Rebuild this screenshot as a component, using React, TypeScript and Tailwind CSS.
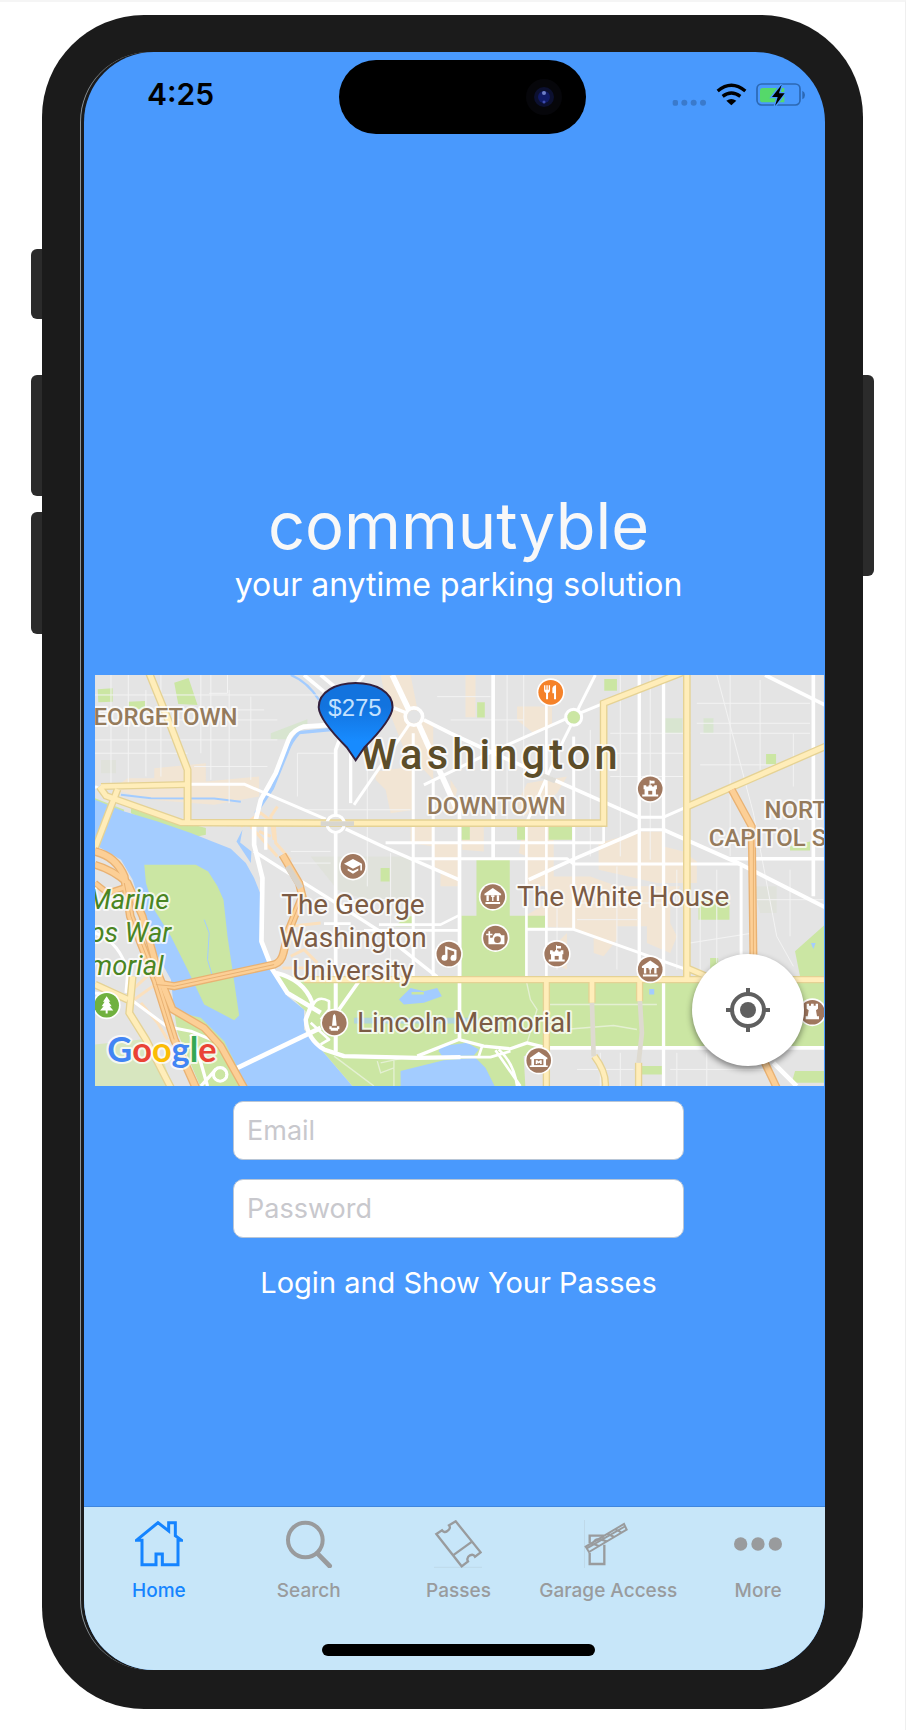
import type { ReactNode } from "react";

const pinColor = "#a0785f";

function Poi({ x, y, color = pinColor, children }: { x: number; y: number; color?: string; children: ReactNode }) {
  return (
    <g transform={`translate(${x} ${y})`}>
      <circle r="42" fill="#fff" />
      <circle r="37" fill={color} />
      <g fill="#fff">{children}</g>
    </g>
  );
}

const Museum = () => (
  <>
    <path d="M-25 -9 L0 -26 L25 -9 V-4 H-25Z" />
    <path d="M-19 -4h7v17h-7z M-5 -4h10v5h-3v12h-4v-12h-3z M12 -4h7v17h-7z M-22 16h44v6h-44z" />
  </>
);

const Castle = () => (
  <>
    <path d="M-2 -26h3v2h12v8h-12v7h-3z" />
    <path d="M-20 -11h8v4h7v-4h10v4h7v-4h8v12h-3v16h7v6h-48v-6h7v-16h-3z" />
    <rect x="-6" y="6" width="12" height="11" fill={pinColor} />
  </>
);

type Line = { d: string; w?: number };

const whiteRoads: Line[] = [
  { d: "M735 490V1145 M735 440V240L750 200", w: 11 },
  { d: "M780 200V400", w: 10 },
  { d: "M968 190V930 M1028 330V930", w: 9 },
  { d: "M1107 400V1110", w: 11 },
  { d: "M1208 15V565", w: 11 },
  { d: "M1308 450V925", w: 8 },
  { d: "M1368 100V930", w: 8 },
  { d: "M1450 200V780", w: 9 },
  { d: "M1540 470V520", w: 8 },
  { d: "M1647 15V930 M1720 30V1250", w: 10 },
  { d: "M1953 580V860", w: 9 },
  { d: "M2170 15V680", w: 11 },
  { d: "M885 519H1540", w: 9 },
  { d: "M970 567H1430L1450 583H1950", w: 9 },
  { d: "M1920 567H2205", w: 11 },
  { d: "M1647 442H1720 M1647 480H1720", w: 9 },
  { d: "M1360 1135H2205", w: 11 },
  { d: "M1310 779H1450L1790 900", w: 9 },
  { d: "M865 765H1050L1110 735 M700 762H780 M820 782H1110", w: 8 },
  { d: "M12 350L40 365 M300 343H460L705 448", w: 9 },
  { d: "M765 478L880 532L1110 632", w: 10 },
  { d: "M790 405L955 165", w: 9 },
  { d: "M905 15L955 120", w: 17 },
  { d: "M985 165L1100 420", w: 17 },
  { d: "M820 15L800 40 M900 110L950 130", w: 10 },
  { d: "M1000 150L1080 190L1210 250L1650 445", w: 11 },
  { d: "M1000 345L1210 243L1430 145L1540 100", w: 9 },
  { d: "M1515 15L1467 110L1450 150L1420 210L1370 320L1310 455", w: 9 },
  { d: "M1315 630L1450 568L1650 482", w: 11 },
  { d: "M1720 480L1940 578L2210 715", w: 12 },
  { d: "M1720 442L1790 411", w: 9 },
  { d: "M2025 15L2205 105", w: 11 },
  { d: "M690 15L750 65 M640 15L700 65", w: 11 },
  { d: "M720 165L640 170Q608 180 595 205L555 310L510 390L490 470V525L515 625L512 815L545 900L590 970L690 1030", w: 14 },
  { d: "M490 545L580 602L720 690L860 780L1040 922", w: 10 },
  { d: "M525 460V540", w: 10 },
  { d: "M440 1195L690 1075", w: 14 },
  { d: "M805 935L745 1020 M735 930V1150", w: 11 },
  { d: "M555 910Q640 930 665 1000L645 1050Q650 1110 700 1140L760 1160L980 1165L1110 1163", w: 13 },
  { d: "M980 1160L1105 1110L1180 1130L1260 1138L1310 1120L1370 1135", w: 10 },
  { d: "M1080 1163H1200L1260 1145 M1215 1142L1290 1250 M1175 1130L1165 1160 M1225 1140Q1270 1180 1280 1250", w: 8 },
  { d: "M665 1010Q680 975 715 995V1020L690 1050 M660 1060L715 1110L690 1125", w: 8 },
  { d: "M12 790Q90 820 110 910L105 970 M12 970L120 990L230 1072L300 1085L385 1120L430 1190", w: 9 },
  { d: "M300 1095L330 1180L350 1250 M330 1250L375 1200", w: 10 },
  { d: "M2050 1180L2120 1250", w: 14 },
];

const yellowRoads: Line[] = [
  { d: "M175 10L240 170L290 300V460", w: 16 },
  { d: "M30 350L290 344", w: 13 },
  { d: "M80 358L12 535", w: 15 },
  { d: "M25 350L45 378L270 458L700 460H1540V100L1775 8", w: 15 },
  { d: "M1790 10V925", w: 15 },
  { d: "M1790 411L2210 228", w: 15 },
  { d: "M640 930H2210 M1790 895L1860 925", w: 14 },
  { d: "M1368 930V1255 M1505 930V1000", w: 14 },
  { d: "M1512 1160Q1550 1210 1545 1255 M1648 930V995 M1645 1180V1255", w: 14 },
  { d: "M12 945L110 990 M125 920L115 1030L165 1110L240 1255", w: 16 },
];

const orangeRoads: Line[] = [
  { d: "M1925 360L1985 470L1990 860L2010 1150L2060 1255", w: 16 },
  { d: "M190 940L250 950L550 885Q572 878 578 850L595 780L635 680L625 640L575 555", w: 17 },
  { d: "M12 545Q75 560 100 620L118 740L195 935L250 1110L315 1255", w: 18 },
  { d: "M12 585Q65 600 110 640L155 740L205 920L245 1020L340 1075L390 1130L460 1255", w: 16 },
  { d: "M12 640L50 670L110 650", w: 12 },
];

const faintRoads =
  "M12 75H690 M12 150H560 M12 210H560 M12 250H290 M310 290H530 M60 15V340 M112 15V340 M165 60V320 M210 15V320 M360 15V330 M415 60V400 M480 80V330 M330 15V250 M30 120H520 M355 70H410V15 M620 250H730 M620 250V380 M600 545H720 M590 580H720 M830 470V650 M900 550V900 M740 690H960 M640 420H960 M830 270V460 M1040 80H1200 M1080 150H1300 M1300 15V440 M1250 15V450 M1500 180V560 M1590 15V560 M1680 15V570 M1560 190H1800 M1560 250H1790 M1560 320H1790 M1820 100H2160 M1820 160H2160 M1830 285H2060 M1920 15V560 M2010 30V300 M1880 15L1990 430L2060 800L2110 890 M1830 190H2160 M2110 190V350 M1830 700V920 M1880 600V880 M1800 820L1990 790 M2100 600V800 M2000 690H2200 M1400 690V900 M1580 590V900 M1760 600V900 M1460 700H1770 M1460 750H1640 M1530 1150V1250 M1590 1150V1250 M1460 1200H1630 M1760 1150V1250 M1850 1150V1250 M1740 1200H2020";

function RoadSet({ roads, casing, fill }: { roads: Line[]; casing: string; fill: string }) {
  return (
    <g fill="none">
      {roads.map((r) => (
        <path key={"c" + r.d} d={r.d} stroke={casing} strokeWidth={(r.w ?? 12) + 8} />
      ))}
      {roads.map((r) => (
        <path key={r.d} d={r.d} stroke={fill} strokeWidth={r.w} />
      ))}
    </g>
  );
}

function CityMap() {
  return (
    <svg viewBox="12 15 2190 1236" className="block h-auto w-full font-['Roboto',sans-serif]" role="img" aria-label="Map of Washington">
      <rect x="12" y="15" width="2190" height="1236" fill="#e4e4e4" />
      <g fill="#f2e5d4">
        <path d="M75 350L110 325H190V295L345 280V335L505 320V380L370 405L180 390L90 365Z" />
        <path d="M870 15H960L985 140L1028 170V330L1000 300L965 300L890 110Z" />
        <path d="M855 305L970 290V420L900 430L885 360L855 330Z" />
        <path d="M960 470H1030V518H1110V650H1050V600L1030 590V530L960 520Z" />
        <path d="M1125 15H1155V142H1125Z M1280 110H1385V170L1330 190L1280 150Z" />
        <path d="M1080 330L1100 360L1080 440Z M1310 340L1430 320L1400 370L1300 440L1280 400Z" />
        <path d="M1115 470H1180V545L1115 540Z M1300 470H1390V650H1310V560L1285 550Z" />
        <path d="M1525 520L1650 485H1720V530L1780 545L1820 575V640H1700L1525 600Z" />
        <path d="M1370 620H1500L1580 650H1770L1740 700V760L1760 800L1740 850L1670 820V770H1580V810L1540 860L1510 850V800L1450 775L1310 770V735L1370 700Z" />
        <path d="M1430 790V900L1390 880L1400 820Z" />
      </g>
      <path d="M660 560H960V700H850L740 660Z M30 270H75V310H30Z M1990 650H2060V730H2010Z" fill="#e0e2db" />
      <g fill="#cbe6a3">
        <path d="M20 58L65 55V95L22 97Z M250 38L293 24L320 105L262 102Z M112 95L162 93V122L112 112Z" />
        <path d="M120 415L345 475V495L310 502L230 478L120 430Z M870 595H897V635H870Z M915 770H965V740H945Z" />
        <path d="M1160 97H1183V143H1160Z M1542 27H1580V62H1542Z M2028 252H2058V285H2028Z" />
        <path d="M1113 472H1138V510H1113Z M1280 472H1305V510H1280Z M1375 472H1445V510H1375Z" />
        <path d="M1158 570H1258V738H1365V775H1308V925H1113V738H1158Z M1825 690H1918V750H1825Z M1860 865H1884V900H1860Z" />
        <path d="M2115 845L2205 765V920H2130Z M2100 530L2160 515V542H2100Z" />
        <path d="M12 385L100 420L95 435L12 410Z" />
      </g>
      <path d="M540 190L650 148V168L590 208H540Z M1725 145H1777V190H1725Z M1840 145H1870V190H1840Z" fill="#d8e5d0" />

      <path
        d="M12 390L100 425L200 455L300 490L420 537L465 580L490 625L512 680V830L555 910L590 980L640 1020V1080L700 1150L790 1255H465L430 1190L385 1110L330 1060L250 1030L240 930L190 840L155 730L125 630L90 570L12 525Z"
        fill="#a3ccff"
      />
      <path d="M455 480L437 515L480 580L482 545L448 518Z" fill="#a3ccff" />
      <path d="M160 585H315L352 605L380 650L398 690L410 800L445 1038L430 1052L340 1005L290 900L240 800L190 720L165 640Z" fill="#cbe6a3" />
      <path d="M250 1025L330 1045L400 1115L470 1255H330L260 1090Z" fill="#cbe6a3" />
      <path d="M12 1125L150 1110L220 1180L245 1255H12Z" fill="#d7e6bf" />
      <path d="M545 905L640 930H2205V1135H1370L1300 1160L1305 1255H790L700 1150L645 1085V1025L590 970Z" fill="#cbe6a3" />
      <g fill="#a3ccff">
        <path d="M930 1255V1205L990 1190L1060 1172L1155 1165L1185 1195L1215 1255Z" />
        <path d="M1050 1130L1130 1120L1165 1140L1150 1158L1055 1160L1045 1145Z" />
        <path d="M925 990L960 955L1000 965L1040 955L1054 980L1000 1000L940 1005Z" />
        <path d="M790 1045H1160V1062H790Z" opacity=".6" />
        <path d="M2163 820H2177L2170 838Z M1677 958H1692V975H1677Z" />
      </g>
      <path d="M963 967H1000V975H963Z M1650 1190H1718V1215H1650Z M2115 1205H2205V1240H2105Z" fill="#cbe6a3" />
      <g fill="none" stroke="#a3ccff">
        <path d="M600 15Q650 35 685 90" strokeWidth="7" />
        <path d="M730 178L625 188Q600 215 590 245L545 355L495 430" strokeWidth="10" />
        <path d="M90 375L180 385L370 386L450 396" strokeWidth="6" />
        <path d="M340 750L355 790L350 870L365 920" strokeWidth="3" />
      </g>
      <path d={faintRoads} fill="none" stroke="#f3f3f3" strokeWidth="3" />
      <path d="M1308 935L1320 990L1340 1020L1310 1120 M1370 1005H1700 M1420 1080L1570 1068L1640 1080 M870 1180L940 1165 M860 1175L870 1210L910 1195V1170 M910 1170V1250 M730 1160L850 1250" fill="none" stroke="#e4f0d2" strokeWidth="4" />
      <g fill="none" stroke="#fbe0bd" strokeWidth="9">
        <path d="M450 470L510 430L550 460L555 520L600 570 M560 410L540 440L550 510 M480 470L560 560 M505 485L540 500" />
        <path d="M600 770L690 760 M600 860L640 840L680 880 M575 895H640 M125 960L190 900 M130 990L200 940" />
        <path d="M150 1000L200 1060L230 1110" />
      </g>
      <g fill="none" stroke="#fff" strokeLinejoin="round">
        {whiteRoads.map((r) => (
          <path key={r.d} d={r.d} strokeWidth={r.w} />
        ))}
        <circle cx="970" cy="140" r="26" strokeWidth="11" />
        <circle cx="1450" cy="142" r="24" strokeWidth="9" />
        <circle cx="388" cy="1215" r="20" strokeWidth="10" />
      </g>
      <circle cx="970" cy="140" r="20" fill="#e4e4e4" />
      <circle cx="1450" cy="142" r="19" fill="#cbe6a3" />
      <circle cx="388" cy="1215" r="15" fill="#cbe6a3" />
      <RoadSet roads={yellowRoads} casing="#e5d294" fill="#ffedb9" />
      <RoadSet roads={orangeRoads} casing="#e9b273" fill="#fccf96" />
      <g fill="none">
        <path d="M195 945L250 950L550 885 M100 640L120 740L195 935L250 1110 M590 790L635 680 M1990 500V860" stroke="#e9b273" strokeWidth="3" />
        <path d="M590 590L630 655" stroke="#d9d3c9" strokeWidth="18" />
        <path d="M1505 1000L1510 1160 M1649 995L1655 1090L1645 1180" stroke="#dedad0" strokeWidth="14" />
        <circle cx="735" cy="462" r="26" stroke="#fff" strokeWidth="9" />
        <path d="M690 462H790" stroke="#d8d6cf" strokeWidth="15" />
        <path d="M1350 315L1395 333" stroke="#deddd8" strokeWidth="16" />
      </g>

      <g stroke="#fff" strokeOpacity=".75" strokeWidth="12" strokeLinejoin="round" paintOrder="stroke" fill="#957b5c" fontSize="72" fontWeight="500">
        <text x="440" y="164" textAnchor="end">EORGETOWN</text>
        <text x="1218" y="432" textAnchor="middle">DOWNTOWN</text>
        <text x="2023" y="445">NORT</text>
        <text x="1856" y="530">CAPITOL S</text>
        <text x="808" y="296" fill="#5c4d29" fontSize="125" className="tracking-widest">Washington</text>
        <g fill="#7b5b44" fontSize="84" fontWeight="400">
          <g textAnchor="middle">
            <text x="787" y="734">The George</text>
            <text x="787" y="833">Washington</text>
            <text x="787" y="932">University</text>
          </g>
          <text x="799" y="1087">Lincoln Memorial</text>
          <text x="1280" y="708">The White House</text>
        </g>
        <g fill="#4a8522" fontSize="82" fontWeight="400" fontStyle="italic" textAnchor="end">
          <text x="235" y="717">Marine</text>
          <text x="241" y="817">ps War</text>
          <text x="218" y="916">morial</text>
        </g>
        <text x="49" y="1177" fontSize="103" fontWeight="700" className="font-['Lato',sans-serif]">
          <tspan fill="#4285f4">G</tspan>
          <tspan fill="#ea4335">o</tspan>
          <tspan fill="#fbbc05">o</tspan>
          <tspan fill="#4285f4">g</tspan>
          <tspan fill="#34a853">l</tspan>
          <tspan fill="#ea4335">e</tspan>
        </text>
      </g>

      <Poi x={787} y={590}>
        <path d="M-27 -8L0 -22L27 -8V12H22V-4L0 7Z M-16 6L0 14L16 6V12L0 22L-16 12Z" />
      </Poi>
      <Poi x={1381} y={67} color="#f58229">
        <path d="M-20 -21h4v13h3v-13h4v13h3v-13h4v15q0 6-6 8v19h-6v-19q-6-2-6-8z M5 -13q2-8 11-9v43h-6v-18h-5z" />
      </Poi>
      <Poi x={1680} y={357}><Castle /></Poi>
      <Poi x={1399} y={853}><Castle /></Poi>
      <Poi x={1207} y={681}><Museum /></Poi>
      <Poi x={1680} y={899}><Museum /></Poi>
      <Poi x={1215} y={805}>
        <path d="M-21 -20h5v7h7v5h-7v7h-5v-7h-7v-5h7z M-6 -8l5-6h14l5 6h9v27h-48v-20h12z" />
        <circle cx="6" cy="5" r="10" fill={pinColor} />
      </Poi>
      <Poi x={1075} y={853}>
        <path d="M-11 -24L23 -12V12a9 9 0 1 1-7-9V-7L-4 -14V11a9 9 0 1 1-7-8Z" />
      </Poi>
      <Poi x={47} y={1007} color="#70b13f">
        <path d="M0 -27L11 -10H6L15 3H9L20 16H3V25H-3V16H-20L-9 3H-15L-6 -10H-11Z" />
      </Poi>
      <Poi x={731} y={1060}>
        <path d="M-4 -21L0 -27L4 -21L7 9H-7Z M-15 10H-8V15H8V10H15V19H-15Z M-11 19H11V24H-11Z" />
      </Poi>
      <Poi x={1345} y={1173}>
        <path d="M-26 -8L0 -26L26 -8V-4H22V15H27V20H-27V15H-22V-4H-26Z" />
        <rect x="-14" y="-4" width="28" height="18" fill={pinColor} />
        <path d="M-9 -1h5l4 4 4-4h5v12h-5v-5l-4 3-4-3v5h-5z" />
      </Poi>
      <Poi x={2167} y={1028}>
        <path d="M-17 -25h7v6h6v-6h8v6h6v-6h7v15l-6 4 3 18h6v9h-40v-9h6l3-18-6-4z" />
      </Poi>

      <defs>
        <linearGradient id="pin" x1="0" y1="0" x2="0" y2="1">
          <stop offset=".3" stopColor="#1273de" />
          <stop offset=".75" stopColor="#178bff" />
        </linearGradient>
      </defs>
      <path d="M795 271L768 232Q686 150 684 112C684 66 735 39 795 39S906 66 906 112Q904 150 822 232Z" fill="url(#pin)" stroke="#34203d" strokeWidth="6" />
      <text x="793" y="137" textAnchor="middle" fontSize="72" fill="#c3e2ff" className="font-['Liberation_Sans',sans-serif]">$275</text>
    </svg>
  );
}

function StatusBar() {
  return (
    <header className="grid grid-cols-[255px_247px_1fr] items-center pt-2">
      <time className="pb-1.5 pl-[63px] text-[30px] leading-9 font-semibold text-black">4:25</time>
      <div className="flex h-[74px] items-center justify-end rounded-full bg-black pr-6">
        <svg viewBox="0 0 36 36" className="size-9" aria-hidden="true">
          <circle cx="18" cy="18" r="18" fill="#06060a" />
          <circle cx="18" cy="18" r="10" fill="#0c1030" />
          <circle cx="18" cy="18" r="6" fill="#101a66" />
          <circle cx="18" cy="14" r="2" fill="#7080c8" />
          <circle cx="18" cy="23" r="1.5" fill="#3e4cae" />
        </svg>
      </div>
      <div className="flex items-center justify-end gap-[9px] pr-[27px] pb-1.5">
        <svg viewBox="655 243 105 72" className="h-6 w-[35px]" fill="#3a7acc" aria-hidden="true">
          <rect x="657" y="297" width="16" height="17" rx="5" />
          <circle cx="692" cy="305" r="9" />
          <circle cx="720" cy="305" r="9" />
          <circle cx="748" cy="305" r="9" />
        </svg>
        <svg viewBox="787 243 93 72" className="h-6 w-[31px]" fill="none" stroke="#000" strokeWidth="10" aria-hidden="true">
          <path d="M792 270Q833 235 875 270" />
          <path d="M807 286Q833 266 860 286" />
          <path d="M833 313L818 299Q833 289 848 299Z" fill="#000" stroke="none" />
        </svg>
        <svg viewBox="908 243 150 72" className="h-6 w-[50px]" aria-hidden="true">
          <rect x="911" y="249" width="129" height="63" rx="14" fill="none" stroke="#2c68b3" strokeWidth="5" />
          <path d="M1047 269Q1055 273 1055 282T1047 295Z" fill="#2c68b3" />
          <path d="M928 261H993V304H928Q920 304 920 296V269Q920 261 928 261Z" fill="#55d86a" />
          <path d="M985 251L956 288H973L965 315L994 277H977Z" fill="#000" stroke="#4999fd" strokeWidth="8" paintOrder="stroke" />
        </svg>
      </div>
    </header>
  );
}

const tabs: { label: string; box: string; active?: boolean; icon: ReactNode }[] = [
  {
    label: "Home",
    active: true,
    box: "166 90 144 144",
    icon: (
      <path d="M170 151L235 98L267 123V98H287V137L306 151H295V224H248V192H229V224H187V151Z" strokeWidth="9" />
    ),
  },
  {
    label: "Search",
    box: "611 90 144 144",
    icon: (
      <>
        <circle cx="672" cy="150" r="52" strokeWidth="12" />
        <path d="M708 190L745 228" strokeWidth="14" strokeLinecap="round" />
      </>
    ),
  },
  {
    label: "Passes",
    box: "1062 90 144 144",
    icon: (
      <>
        <path
          d="M1127 94L1202 187L1185 200Q1180 191 1170 196Q1158 203 1164 214L1145 229L1069 132L1086 121Q1093 130 1102 123Q1114 115 1107 106Z M1122 194L1176 155"
          strokeWidth="7"
        />
        <path d="M1062 232H1206" strokeWidth="2" strokeOpacity=".25" />
      </>
    ),
  },
  {
    label: "Garage Access",
    box: "405 90 144 144",
    icon: (
      <>
        <path d="M422 160V137H461V146 M422 188V222H466V164 M436 154Q441 145 450 150" strokeWidth="7" />
        <path d="M410 170L525 102L533 119L420 186Z M428 160L450 168 M450 148L474 154 M476 132L496 141 M500 118L518 128 M412 176L530 108" strokeWidth="6" />
        <path d="M406 90V234" strokeWidth="2" strokeOpacity=".3" />
      </>
    ),
  },
  {
    label: "More",
    box: "853 90 144 144",
    icon: (
      <g fill="currentColor" stroke="none">
        <circle cx="873" cy="162" r="20" />
        <circle cx="925" cy="162" r="20" />
        <circle cx="977" cy="162" r="20" />
      </g>
    ),
  },
];

function TabBar() {
  return (
    <nav className="border-t border-[#3f86de] bg-[#c7e6f9] pt-[13px] pb-[14px]">
      <ul className="grid grid-cols-5">
        {tabs.map((t) => (
          <li key={t.label}>
            <a
              href="#"
              aria-current={t.active ? "page" : undefined}
              className={`flex flex-col items-center gap-[11px] ${t.active ? "text-[#1584ff]" : "text-[#999b9d]"}`}
            >
              <svg viewBox={t.box} className="size-12" fill="none" stroke="currentColor" aria-hidden="true">
                {t.icon}
              </svg>
              <span className="text-[19px] leading-6 font-medium whitespace-nowrap">{t.label}</span>
            </a>
          </li>
        ))}
      </ul>
      <div className="mx-auto mt-[41px] h-3 w-[273px] rounded-full bg-black" />
    </nav>
  );
}

const field =
  "h-[59px] w-[451px] rounded-[10px] border border-[#b9c6d6] bg-white px-[13px] text-[27px] text-black placeholder:text-[#c8c8cd] outline-none";

export default function App() {
  return (
    <main className="flex border-t-2 border-r border-t-[#f5f5f5] border-r-[#efefef] bg-white pt-[13px] pr-[31px] pb-[21px] pl-[31px] font-['Inter',sans-serif]">
      <div className="flex w-[11px] shrink-0 flex-col pt-[234px]">
        <div className="h-[70px] rounded-l-[6px] bg-[#2b2b2b]" />
        <div className="mt-14 h-[121px] rounded-l-[6px] bg-[#2b2b2b]" />
        <div className="mt-4 h-[122px] rounded-l-[6px] bg-[#2b2b2b]" />
      </div>
      <div className="min-w-0 grow rounded-[102px] bg-[#1b1b1b] pt-[37px] pr-[38px] pb-[39px] pl-[38px]">
        <div className="rounded-[70px] border-l border-[#8c9499] bg-[#1b1b1b] pl-[3px]">
          <div className="overflow-hidden rounded-[70px] bg-[#4999fd]">
            <div className="-mr-2">
              <StatusBar />
              <h1 className="mt-[356px] text-center text-[65px] leading-[72px] text-[#f8f8f8]">commutyble</h1>
              <p className="mt-[3px] text-center text-[32px] leading-10 text-white">your anytime parking solution</p>
              <div className="relative mt-[70px] mr-[9px] ml-[11px]">
                <CityMap />
                <button
                  type="button"
                  aria-label="Show my location"
                  className="absolute right-5 bottom-5 flex size-28 items-center justify-center rounded-full bg-white shadow-[0_3px_6px_rgba(0,0,0,0.45)]"
                >
                  <svg viewBox="0 0 132 132" className="size-11" fill="none" stroke="#5f5f5f" strokeWidth="12" aria-hidden="true">
                    <circle cx="66" cy="66" r="48" />
                    <path d="M66 0V18 M66 114V132 M0 66H18 M114 66H132" />
                    <circle cx="66" cy="66" r="24" fill="#5f5f5f" stroke="none" />
                  </svg>
                </button>
              </div>
              <form className="mt-[15px] flex flex-col items-center" onSubmit={(e) => e.preventDefault()}>
                <input type="email" aria-label="Email" placeholder="Email" className={field} />
                <input type="password" aria-label="Password" placeholder="Password" className={`mt-[19px] ${field}`} />
                <button type="submit" className="mt-[25px] text-[29px] leading-10 text-white">
                  Login and Show Your Passes
                </button>
              </form>
              <div className="h-[203px]" />
              <TabBar />
            </div>
          </div>
        </div>
      </div>
      <div className="w-[11px] shrink-0 pt-[360px]">
        <div className="h-[201px] rounded-r-[6px] bg-[#2b2b2b]" />
      </div>
    </main>
  );
}
